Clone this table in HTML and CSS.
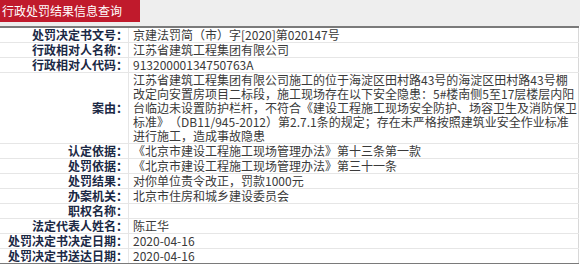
FILE: index.html
```html
<!DOCTYPE html>
<html lang="zh-CN">
<head>
<meta charset="utf-8">
<title>行政处罚结果信息查询</title>
<link rel="stylesheet" href="styles.css">
</head>
<body>
<div class="topbar"><span class="title">行政处罚结果信息查询</span></div>
<table class="info">
  <tr><th>处罚决定书文号：</th><td>京建法罚简（市）字[2020]第020147号</td></tr>
  <tr><th>行政相对人名称：</th><td>江苏省建筑工程集团有限公司</td></tr>
  <tr><th>行政相对人代码：</th><td>91320000134750763A</td></tr>
  <tr><th>案由：</th><td>江苏省建筑工程集团有限公司施工的位于海淀区田村路43号的海淀区田村路43号棚改定向安置房项目二标段，施工现场存在以下安全隐患：5#楼南侧5至17层楼层内阳台临边未设置防护栏杆，不符合《建设工程施工现场安全防护、场容卫生及消防保卫标准<span class="cite">》</span>（DB11/945-2012）第2.7.1条的规定；存在未严格按照建筑业安全作业标准进行施工，造成事故隐患</td></tr>
  <tr><th>认定依据：</th><td>《北京市建设工程施工现场管理办法》第十三条第一款</td></tr>
  <tr><th>处罚依据：</th><td>《北京市建设工程施工现场管理办法》第三十一条</td></tr>
  <tr><th>处罚结果：</th><td>对你单位责令改正，罚款1000元</td></tr>
  <tr><th>办案机关：</th><td>北京市住房和城乡建设委员会</td></tr>
  <tr><th>职权名称：</th><td></td></tr>
  <tr><th>法定代表人姓名：</th><td>陈正华</td></tr>
  <tr><th>处罚决定书决定日期：</th><td>2020-04-16</td></tr>
  <tr><th>处罚决定书送达日期：</th><td>2020-04-16</td></tr>
</table>
</body>
</html>
```
FILE: styles.css
```css
body {
  margin: 0;
  background: #fff;
  font-family: "Noto Sans CJK SC", "Noto Sans", sans-serif;
  font-size: 12px;
}
.topbar {
  background: #eeeeee;
  height: 26px;
}
.title {
  display: inline-block;
  background: #c01a2c;
  color: #fff;
  width: 138px;
  height: 22px;
  line-height: 22px;
  padding-left: 2px;
  font-size: 12px;
  vertical-align: top;
}
.info {
  width: 579px;
  border-collapse: collapse;
  border-top: 2px solid #7a7a7a;
  border-bottom: 2px solid #7a7a7a;
  border-right: 1px solid #d8d8d8;
}
.info th, .info td {
  padding: 0;
  line-height: 14px;
  border-bottom: 1px solid #e6e6e6;
  vertical-align: middle;
}
.info th {
  width: 128px;
  text-align: right;
  font-weight: bold;
  color: #1b2945;
  border-right: 1px solid #e6e6e6;
  white-space: nowrap;
}
.info td {
  padding-left: 4px;
  color: #3a3a3a;
  text-align: left;
}
.cite {
  letter-spacing: 6px;
}
```
